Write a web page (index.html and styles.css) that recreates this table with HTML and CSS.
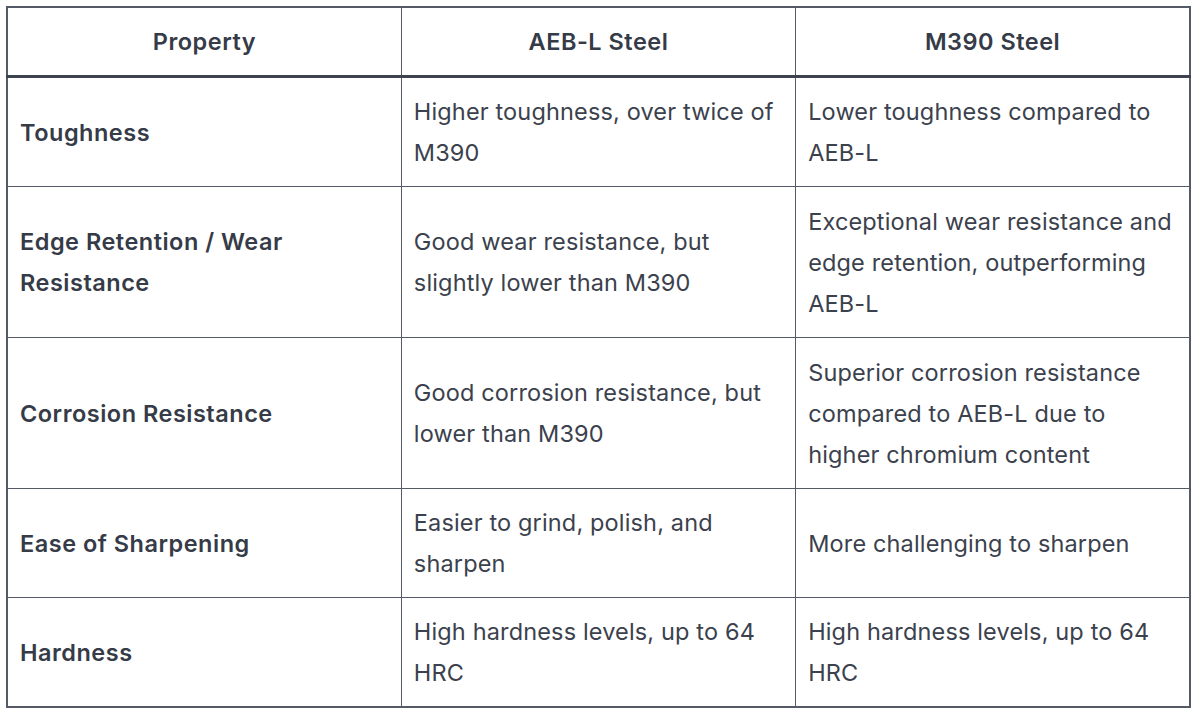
FILE: index.html
```html
<!DOCTYPE html>
<html>
<head>
<meta charset="utf-8">
<link rel="stylesheet" href="styles.css">
</head>
<body>
<table class="cmp">
  <thead>
    <tr><th>Property</th><th>AEB-L Steel</th><th>M390 Steel</th></tr>
  </thead>
  <tbody>
    <tr class="r2"><td class="prop">Toughness</td><td>Higher toughness, over twice of M390</td><td>Lower toughness compared to AEB-L</td></tr>
    <tr class="r3"><td class="prop">Edge Retention / Wear Resistance</td><td>Good wear resistance, but slightly lower than M390</td><td>Exceptional wear resistance and edge retention, outperforming AEB-L</td></tr>
    <tr class="r3"><td class="prop">Corrosion Resistance</td><td>Good corrosion resistance, but lower than M390</td><td>Superior corrosion resistance compared to AEB-L due to higher chromium content</td></tr>
    <tr class="r2"><td class="prop">Ease of Sharpening</td><td>Easier to grind, polish, and sharpen</td><td>More challenging to sharpen</td></tr>
    <tr class="r2"><td class="prop">Hardness</td><td>High hardness levels, up to 64 HRC</td><td>High hardness levels, up to 64 HRC</td></tr>
  </tbody>
</table>
</body>
</html>
```
FILE: styles.css
```css
html, body { background: #ffffff; }
body {
  margin: 6px 0 0 6px;
  font-family: Inter, "Noto Sans", "Liberation Sans", sans-serif;
  color: #3b414d;
}
.cmp {
  width: 1185px;
  border-collapse: collapse;
  table-layout: fixed;
  border: 2px solid #555b66;
  font-size: 23.5px;
  line-height: 41px;
  letter-spacing: 0.15px;
}
.cmp th, .cmp td {
  border: 1.5px solid #555b66;
  padding: 13px 12px;
  vertical-align: middle;
  text-align: left;
}
.cmp th {
  text-align: center;
  font-weight: 600;
  letter-spacing: 0.5px;
  border-bottom: 3px solid #3d4450;
  color: #353b47;
}
.cmp td.prop {
  font-weight: 600;
  letter-spacing: 0.5px;
  color: #353b47;
}
.cmp .r2 { height: 109px; }
.cmp .r3 { height: 151px; }
```
